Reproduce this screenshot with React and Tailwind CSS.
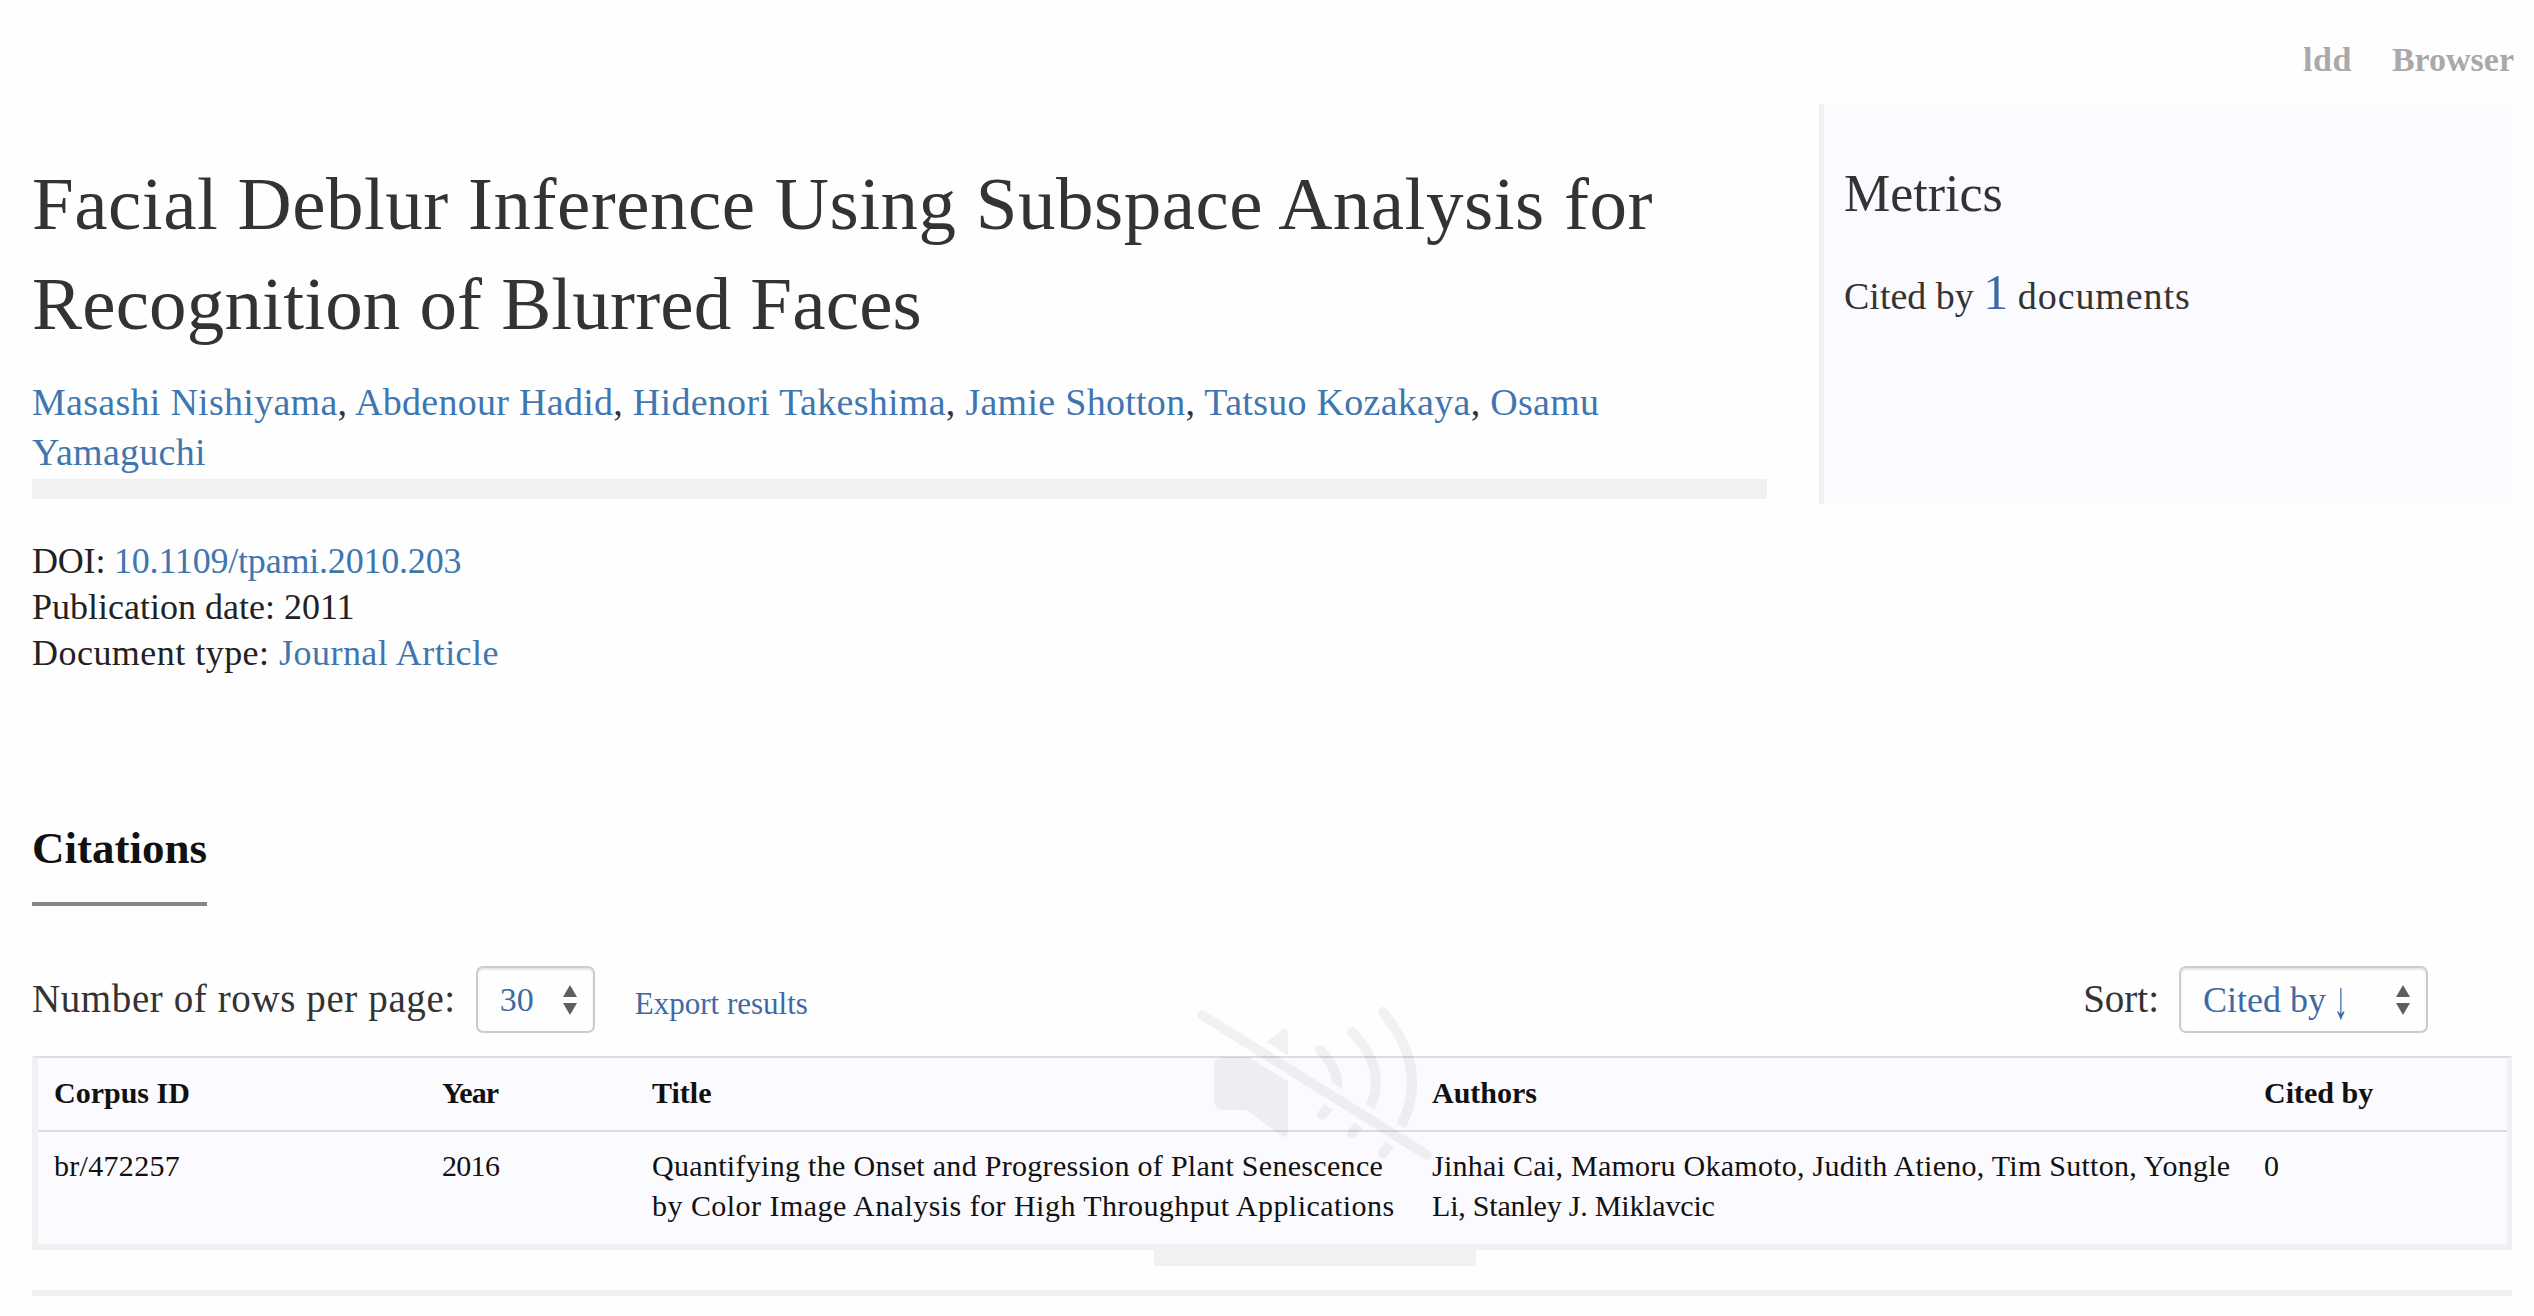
import React from "react";

const authors = [
  "Masashi Nishiyama",
  "Abdenour Hadid",
  "Hidenori Takeshima",
  "Jamie Shotton",
  "Tatsuo Kozakaya",
];

// up/down arrows drawn by the browser's native select on the original page
const SelectArrows = () => (
  <svg width="14" height="30" viewBox="0 0 14 30" className="shrink-0">
    <path d="M7 0 L14 12 L0 12 Z" fill="#5f5f5f" />
    <path d="M7 30 L14 18 L0 18 Z" fill="#5f5f5f" />
  </svg>
);

// faint "muted" overlay sitting over the table
const MutedSpeaker = () => (
  <svg
    width="260"
    height="170"
    viewBox="0 0 260 170"
    fill="none"
    className="absolute left-[1162px] top-[-51px] pointer-events-none"
  >
    <mask id="slash-gap" maskUnits="userSpaceOnUse" x="0" y="0" width="260" height="170">
      <rect width="260" height="170" fill="#fff" />
      <path d="M8 10 L233 150" stroke="#000" strokeWidth="22" />
    </mask>
    <g mask="url(#slash-gap)">
      <path
        d="M20 62 q0 -10 10 -10 h22 L88 25 q6 -3 6 4 V127 q0 7 -6 4 L52 105 H30 q-10 0 -10 -10 Z"
        fill="#000"
        fillOpacity="0.05"
      />
      <g stroke="#000" strokeOpacity="0.05" strokeWidth="10" strokeLinecap="round">
        <path d="M126 45 Q159 78 128 110" />
        <path d="M158 27 Q206 78 158 128" />
        <path d="M189 7 Q247 78 189 148" />
      </g>
    </g>
    <path d="M8 10 L233 150" stroke="#000" strokeOpacity="0.05" strokeWidth="10" strokeLinecap="round" />
  </svg>
);

const App = () => {
  return (
    <div className="relative w-[2534px] h-[1316px] overflow-hidden bg-[#fefefe] text-[#333] font-['Liberation_Serif',serif]">
      <header className="flex h-[104px] justify-end gap-[40px] pt-[40px] pr-[20px] text-[34px] leading-[40px] font-bold text-[#a9a9a9]">
        <span className="tracking-[0.5px]">ldd</span>
        <span>Browser</span>
      </header>

      <div className="flex">
        <div className="ml-[32px] w-[1735px]">
          <h1 className="mt-[50px] text-[75px] leading-[100px] text-[#333]">
            <span className="block tracking-[0.5px]">Facial Deblur Inference Using Subspace Analysis for</span>
            <span className="block tracking-[0.17px]">Recognition of Blurred Faces</span>
          </h1>
          <p className="mt-[23px] text-[38px] leading-[50px] tracking-[0.28px]">
            {authors.map((name) => (
              <span key={name}>
                <a className="text-[#4076b0]">{name}</a>,{" "}
              </span>
            ))}
            <a className="text-[#4076b0]">Osamu</a>
            <br />
            <a className="text-[#4076b0]">Yamaguchi</a>
          </p>
          <div className="h-[20px] bg-[#f1f1f1] mt-[2px]" />
        </div>
        <aside className="ml-[52px] w-[693px] h-[400px] border-l-[5px] border-[#f1f1f5] bg-[#fbfaff] pl-[20px]">
          <h2 className="mt-[60px] text-[52px] leading-[60px] text-[#333]">Metrics</h2>
          <p className="mt-[43px] text-[38px] leading-[50px]">
            <span>Cited by</span> <a className="text-[50px] text-[#3d6aa5]">1</a>{" "}
            <span className="tracking-[0.9px]">documents</span>
          </p>
        </aside>
      </div>

      <div className="ml-[32px] mt-[34px] text-[36px] leading-[46px] text-[#222]">
        <div className="tracking-[-0.2px]">
          DOI: <a className="text-[#4076b0]">10.1109/tpami.2010.203</a>
        </div>
        <div>Publication date: 2011</div>
        <div className="tracking-[0.47px]">
          Document type: <a className="text-[#4076b0]">Journal Article</a>
        </div>
      </div>

      <section className="relative ml-[32px] mt-[147px] w-[2480px]">
        <h2 className="inline-block border-b-4 border-[#888] pb-[29px] text-[45px] leading-[50px] font-bold text-[#111]">
          Citations
        </h2>

        <div className="mt-[60px] flex h-[67px] items-center text-[39px]">
          <span className="tracking-[0.6px]">Number of rows per page:</span>
          <div className="ml-[20px] flex h-[67px] w-[119px] items-center justify-between rounded-[7px] border-2 border-[#ccc] pl-[22px] pr-[16px] text-[#3d6aa5] shadow-[inset_0_2px_2px_rgba(0,0,0,0.1)]">
            <span className="text-[34px]">30</span>
            <SelectArrows />
          </div>
          <a className="ml-[40px] mt-[10px] text-[31px] text-[#3d6aa5]">Export results</a>
          <span className="ml-auto mr-[20px]">Sort:</span>
          <div className="mr-[84px] flex h-[67px] w-[249px] items-center justify-between rounded-[7px] border-2 border-[#ccc] pl-[22px] pr-[16px] text-[#3d6aa5] shadow-[inset_0_2px_2px_rgba(0,0,0,0.1)]">
            <span className="text-[36px]">
              Cited by <span className="-ml-[3px] inline-block scale-y-[1.5] scale-x-[0.8]">↓</span>
            </span>
            <SelectArrows />
          </div>
        </div>

        <div className="relative mt-[23px]">
          <div className="border-t-2 border-l-[6px] border-r-[5px] border-b-[6px] border-t-[#dcdcdc] border-x-[#f1f1f1] border-b-[#f1f1f1] bg-[#fbfaff]">
            <div className="grid grid-cols-[388px_210px_780px_832px_1fr] border-b-2 border-[#dcdcdc] pl-[16px] pb-[4px] h-[74px] items-center text-[30px] font-bold text-[#111]">
              <span>Corpus ID</span>
              <span className="tracking-[-1px]">Year</span>
              <span>Title</span>
              <span>Authors</span>
              <span>Cited by</span>
            </div>
            <div className="grid grid-cols-[388px_210px_780px_832px_1fr] pl-[16px] pt-[14px] h-[112px] text-[30px] leading-[40px] text-[#111]">
              <span className="tracking-[0.3px]">br/472257</span>
              <span className="tracking-[-0.7px]">2016</span>
              <span>
                <span className="block tracking-[0.3px]">Quantifying the Onset and Progression of Plant Senescence</span>
                <span className="block tracking-[0.46px]">by Color Image Analysis for High Throughput Applications</span>
              </span>
              <span>
                <span className="block tracking-[0.26px]">Jinhai Cai, Mamoru Okamoto, Judith Atieno, Tim Sutton, Yongle</span>
                <span className="block tracking-[-0.2px]">Li, Stanley J. Miklavcic</span>
              </span>
              <span>0</span>
            </div>
          </div>
          <MutedSpeaker />
          <div className="absolute left-[1122px] bottom-[-16px] h-[16px] w-[322px] bg-[#f1f1f1]" />
        </div>

        <div className="mt-[40px] h-[6px] bg-[#f1f1f1]" />
      </section>
    </div>
  );
};

export default App;
